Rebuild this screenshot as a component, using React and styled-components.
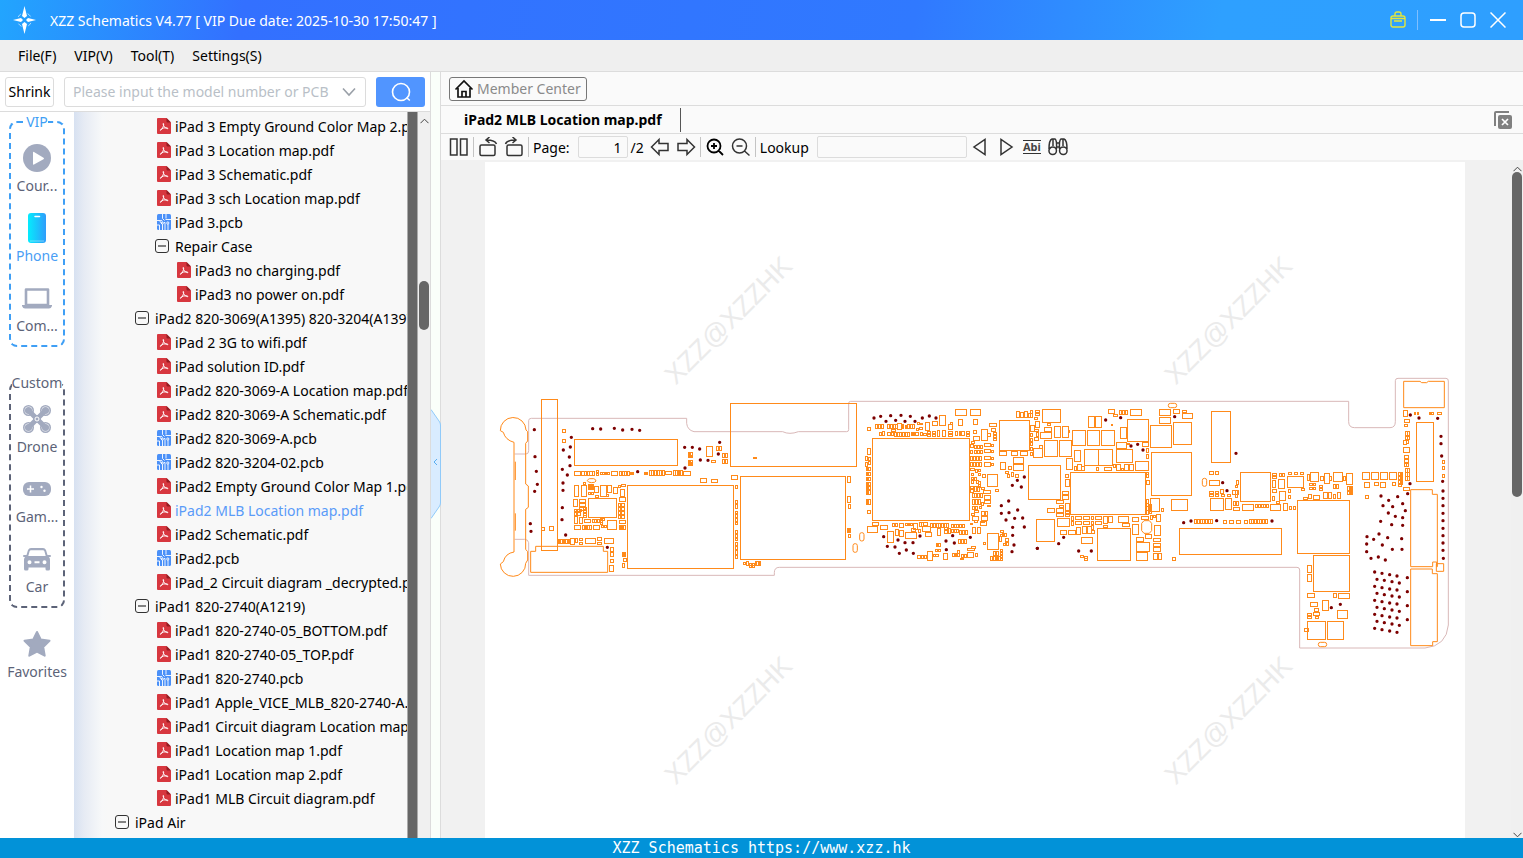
import React, { useState } from "react";
import styled, { createGlobalStyle } from "styled-components";

const GlobalStyle = createGlobalStyle`
  * {
    box-sizing: border-box;
  }
  body {
    margin: 0;
    font-family: "Noto Sans", "Open Sans", sans-serif;
    font-size: 14px;
    line-height: 21px;
    color: #000;
    background: #f0f0f0;
  }
  button, input {
    font: inherit;
    color: inherit;
    margin: 0;
  }
  button {
    padding: 0;
    border: 0;
    background: none;
  }
  a {
    color: inherit;
    text-decoration: none;
  }
  svg {
    display: block;
    flex: none;
  }
`;

const AppStyled = styled.div`
  height: 100vh;
  display: flex;
  flex-direction: column;
`;

const TitleBar = styled.header`
  display: flex;
  align-items: center;
  height: 40px;
  flex: none;
  padding: 0 16px 0 12px;
  color: #fff;
  background: linear-gradient(100deg, #22a5fe 0%, #3370ff 16%, #3079ff 60%, #2ea0ff 80%, #2e9fff 100%);
`;

const Title = styled.h1`
  flex: 1;
  margin: 0 0 0 12px;
  font-size: 14px;
  font-weight: 400;
`;

const WindowButtons = styled.div`
  display: flex;
  align-items: center;
  gap: 12px;
`;

const WindowButton = styled.button`
  display: flex;
  align-items: center;
  justify-content: center;
  width: 18px;
  height: 20px;
`;

const WindowDivider = styled.span`
  width: 1px;
  height: 20px;
  margin: 0 -1px 0 -2px;
  background: #7fbfff;
`;

const MenuBar = styled.nav`
  display: flex;
  align-items: center;
  gap: 18px;
  flex: none;
  height: 32px;
  padding: 0 18px;
  background: #efefef;
  border-bottom: 1px solid #dcdcdc;
`;

const Body = styled.div`
  display: flex;
  flex: 1;
  min-height: 0;
`;

const LeftPanel = styled.aside`
  display: flex;
  flex-direction: column;
  width: 431px;
  flex: none;
  background: #fff;
  border-right: 1px solid #dcdcdc;
`;

const SearchRow = styled.form`
  display: flex;
  align-items: center;
  gap: 10px;
  flex: none;
  height: 40px;
  padding: 0 5px;
  border-bottom: 1px solid #dcdcdc;
`;

const ShrinkButton = styled.button`
  width: 49px;
  height: 30px;
  border: 1px solid #dcdcdc;
  border-radius: 3px;
`;

const SearchBox = styled.div`
  display: flex;
  align-items: center;
  flex: 1;
  height: 30px;
  padding: 0 8px;
  border: 1px solid #dcdcdc;
  border-radius: 3px;
`;

const SearchInput = styled.input`
  flex: 1;
  min-width: 0;
  padding: 0;
  border: 0;
  outline: 0;
  &::placeholder {
    color: #b9bfc7;
  }
`;

const SearchButton = styled.button`
  display: flex;
  align-items: center;
  justify-content: center;
  width: 49px;
  height: 30px;
  border-radius: 3px;
  background: #5195ff;
`;

const LeftContent = styled.div`
  display: flex;
  flex: 1;
  min-height: 0;
`;

const SideNav = styled.nav`
  width: 74px;
  flex: none;
  padding: 0 9px;
  overflow: hidden;
  line-height: 20px;
`;

const NavGroup = styled.fieldset`
  display: flex;
  flex-direction: column;
  gap: 17px;
  min-width: 0;
  margin: 0 0 26px;
  padding: 11px 0 9px;
  border: 2px dashed ${(props) => props.$color};
  border-radius: 8px;
  color: ${(props) => props.$color};
  &:last-of-type {
    margin-bottom: 21px;
  }
`;

const NavLegend = styled.legend`
  margin: 0 auto;
  padding: 0;
  height: 20px;
`;

const NavItem = styled.button`
  display: flex;
  flex-direction: column;
  align-items: center;
  gap: 3px;
  width: 100%;
  color: ${(props) => (props.$active ? "#4a9ef5" : "#5c6378")};
  white-space: nowrap;
`;

const NavIcon = styled.span`
  display: flex;
  align-items: center;
  justify-content: center;
  height: 30px;
  color: #a2aabf;
`;

const Tree = styled.ul`
  flex: 1;
  min-width: 0;
  margin: 0;
  padding: 2px 0 0;
  list-style: none;
  overflow: hidden;
  background: linear-gradient(to right, #d7e1f1 0, #e6ebf4 10px, #f7f8f9 28px, #f8f8f8 34px);
`;

const TreeRow = styled.li`
  display: flex;
  align-items: center;
  gap: 4px;
  height: 24px;
  padding-left: ${(props) => 21 + props.$level * 20}px;
  white-space: nowrap;
`;

const Toggle = styled.button`
  display: flex;
  align-items: center;
  flex: none;
  width: 16px;
  height: 16px;
`;

const FileLink = styled.a`
  display: flex;
  align-items: center;
  gap: 4px;
  padding-left: 2px;
  color: ${(props) => (props.$active ? "#5a9bf8" : "#000")};
`;

const TreeEdge = styled.div`
  width: 11px;
  flex: none;
  background: #666;
  border-left: 1px solid #ababab;
  border-right: 1px solid #ababab;
`;

const ScrollBar = styled.div`
  display: flex;
  flex-direction: column;
  align-items: center;
  justify-content: space-between;
  width: 12px;
  flex: none;
  padding: 6px 0 0;
  background: #f0f0f0;
`;

const ScrollTrack = styled.div`
  flex: 1;
  width: 10px;
  padding-top: ${(props) => props.$top}px;
`;

const ScrollThumb = styled.div`
  height: ${(props) => props.$size}px;
  border-radius: 5px;
  background: #666;
`;

const Splitter = styled.div`
  position: relative;
  width: 10px;
  flex: none;
  background: #fafffa;
  border-right: 1px solid #dcdcdc;
`;

const CollapseTab = styled.button`
  position: absolute;
  top: 44%;
  left: 0;
`;

const Viewer = styled.main`
  display: flex;
  flex-direction: column;
  flex: 1;
  min-width: 0;
  background: #fafafa;
`;

const ViewerHeader = styled.div`
  display: flex;
  align-items: center;
  flex: none;
  height: 34px;
  padding: 0 8px;
  border-bottom: 1px solid #dcdcdc;
`;

const MemberButton = styled.button`
  display: flex;
  align-items: center;
  gap: 3px;
  height: 24px;
  padding: 0 5px 0 4px;
  border: 1px solid #777;
  border-radius: 3px;
  color: #8a8a8a;
`;

const TabRow = styled.div`
  display: flex;
  align-items: center;
  justify-content: space-between;
  flex: none;
  height: 28px;
  padding-right: 11px;
  border-bottom: 1px solid #dcdcdc;
`;

const Tab = styled.button`
  height: 24px;
  padding: 0 18px 0 23px;
  border-right: 1px solid #555;
  font-size: 14px;
  font-weight: 700;
`;

const ToolBar = styled.div`
  display: flex;
  align-items: center;
  flex: none;
  height: 26px;
  padding-left: 4px;
`;

const ToolGroup = styled.div`
  display: flex;
  align-items: center;
  gap: 6px;
  height: 20px;
  padding: 0 4px;
  & + & {
    border-left: 1px solid #c4c4c4;
  }
`;

const ToolButton = styled.button`
  display: flex;
  align-items: center;
  justify-content: center;
  width: 20px;
  height: 20px;
  color: #333;
`;

const ToolInput = styled.input`
  width: ${(props) => props.$width}px;
  height: 22px;
  margin: 0 -3px 0 2px;
  padding: 0 5px;
  border: 1px solid #dcdcdc;
  border-radius: 2px;
  background: #fafafa;
  text-align: right;
`;

const DocumentArea = styled.div`
  display: flex;
  flex: 1;
  min-height: 0;
  background: #f1f1f1;
`;

const PageArea = styled.div`
  flex: 1;
  min-width: 0;
  padding: 2px 46px 0 44px;
  overflow: hidden;
`;

const Page = styled.div`
  min-height: 100%;
  background: #fff;
`;

const Footer = styled.footer`
  flex: none;
  height: 20px;
  font-family: "DejaVu Sans Mono", monospace;
  font-size: 15px;
  text-align: center;
  color: #fff;
  background: #0292d8;
`;

const files = [
  [3, "pdf", "iPad 3 Empty Ground Color Map 2.pdf"],
  [3, "pdf", "iPad 3 Location map.pdf"],
  [3, "pdf", "iPad 3 Schematic.pdf"],
  [3, "pdf", "iPad 3 sch Location map.pdf"],
  [3, "pcb", "iPad 3.pcb"],
  [3, "dir", "Repair Case"],
  [4, "pdf", "iPad3 no charging.pdf"],
  [4, "pdf", "iPad3 no power on.pdf"],
  [2, "dir", "iPad2 820-3069(A1395) 820-3204(A1397)"],
  [3, "pdf", "iPad 2 3G to wifi.pdf"],
  [3, "pdf", "iPad solution ID.pdf"],
  [3, "pdf", "iPad2 820-3069-A Location map.pdf"],
  [3, "pdf", "iPad2 820-3069-A Schematic.pdf"],
  [3, "pcb", "iPad2 820-3069-A.pcb"],
  [3, "pcb", "iPad2 820-3204-02.pcb"],
  [3, "pdf", "iPad2 Empty Ground Color Map 1.pdf"],
  [3, "pdf", "iPad2 MLB Location map.pdf"],
  [3, "pdf", "iPad2 Schematic.pdf"],
  [3, "pcb", "iPad2.pcb"],
  [3, "pdf", "iPad_2 Circuit diagram _decrypted.pdf"],
  [2, "dir", "iPad1 820-2740(A1219)"],
  [3, "pdf", "iPad1 820-2740-05_BOTTOM.pdf"],
  [3, "pdf", "iPad1 820-2740-05_TOP.pdf"],
  [3, "pcb", "iPad1 820-2740.pcb"],
  [3, "pdf", "iPad1 Apple_VICE_MLB_820-2740-A.pdf"],
  [3, "pdf", "iPad1 Circuit diagram Location map.pdf"],
  [3, "pdf", "iPad1 Location map 1.pdf"],
  [3, "pdf", "iPad1 Location map 2.pdf"],
  [3, "pdf", "iPad1 MLB Circuit diagram.pdf"],
  [1, "dir", "iPad Air"],
];

// parts: [x, y, w, h, columns, column pitch, rows, row pitch]
const sections = [
  {
    origin: [15, 654],
    shapes:
      "M31 152A38 38 0 0 1 108 150L113 155V183L107 190V312L115 318V382L107 388V508L113 515V540L107 550A38 38 0 0 1 31 552L40 545Q46 520 72 516V187Q46 180 40 157ZM76 245V300M76 400V452M122 577V514H137V499H340V514H353V577ZM299 296H311Q318 298 318 303Q316 308 305 308Q294 308 292 302Q294 297 299 296Z",
    parts: [
      [154, 58, 48, 454], [254, 179, 309, 78], [722, 70, 377, 189], [412, 316, 319, 249],
      [750, 290, 317, 248], [294, 355, 85, 57], [351, 421, 28, 27], [650, 199, 17, 31],
      [216, 149, 10, 9], [216, 178, 10, 9], [178, 439, 12, 11], [154, 443, 9, 9],
      [680, 199, 6, 11, 2, 9], [698, 220, 6, 11, 2, 9, 2, 18], [664, 240, 11, 7],
      [594, 218, 4, 15, 3, 4, 2, 23], [594, 226, 11, 4, 1, 0, 2, 22], [791, 232, 8, 4],
      [254, 275, 17, 10], [275, 274, 7, 12, 5, 8], [318, 272, 8, 6, 1, 0, 2, 8], [331, 276, 5, 7, 4, 7],
      [365, 275, 18, 11], [388, 274, 6, 12, 4, 8], [420, 277, 4, 6, 2, 6],
      [462, 277, 4, 7, 2, 6], [477, 272, 6, 13, 6, 8], [526, 274, 19, 10], [550, 272, 5, 13, 4, 7],
      [580, 275, 20, 11], [631, 296, 18, 10], [664, 298, 18, 10], [725, 287, 17, 11],
      [737, 317, 6, 8], [737, 361, 6, 10, 1, 0, 2, 13], [737, 393, 6, 8, 1, 0, 4, 11],
      [737, 452, 6, 8, 1, 0, 3, 11], [737, 486, 6, 10, 1, 0, 4, 13],
      [1072, 290, 10, 17], [1072, 349, 10, 18], [1074, 374, 7, 12], [1073, 446, 3, 11, 2, 4], [1075, 463, 7, 9],
      [253, 317, 13, 31], [274, 317, 15, 31], [332, 316, 16, 32], [280, 308, 5, 6], [295, 312, 4, 16, 3, 6],
      [314, 318, 12, 20], [352, 317, 12, 20], [371, 323, 10, 18], [385, 317, 7, 5], [395, 313, 11, 6],
      [392, 328, 11, 20], [295, 337, 5, 7, 2, 9], [315, 346, 11, 5], [350, 343, 6, 6],
      [251, 358, 12, 21], [268, 357, 18, 9, 1, 0, 3, 12], [387, 353, 18, 10], [253, 387, 7, 7, 2, 10, 2, 11],
      [280, 383, 8, 6, 1, 0, 4, 8], [270, 388, 5, 6], [384, 371, 6, 9, 1, 0, 4, 12], [395, 371, 9, 9, 1, 0, 4, 12],
      [388, 422, 18, 9], [252, 410, 10, 19], [267, 412, 10, 18], [283, 418, 18, 10],
      [306, 418, 6, 8, 4, 8], [330, 426, 8, 6], [335, 436, 4, 6, 2, 9], [254, 437, 18, 11],
      [278, 436, 5, 12, 4, 7], [309, 437, 19, 11], [387, 436, 4, 11, 3, 7], [332, 416, 10, 6],
      [204, 479, 4, 11, 4, 4], [223, 479, 4, 11, 4, 4], [242, 474, 11, 18], [257, 476, 6, 11],
      [269, 475, 9, 7, 1, 0, 2, 11], [287, 475, 30, 16], [323, 472, 12, 8, 1, 0, 2, 14], [343, 475, 28, 16],
      [362, 503, 8, 10, 1, 0, 2, 15], [362, 538, 8, 9], [359, 556, 10, 18], [397, 517, 3, 12, 3, 3],
      [401, 535, 8, 10], [397, 550, 7, 12], [761, 546, 4, 7], [768, 545, 6, 12], [779, 551, 6, 6, 2, 7, 2, 6],
      [796, 545, 4, 11, 4, 4],
    ],
    ovals: [[1109, 458, 13, 25], [1089, 491, 13, 26]],
    vias: [
      133, 149, 135, 230, 139, 274, 142, 313, 134, 334, 121, 431, 123, 454, 244, 172, 241, 201, 220, 210,
      238, 231, 240, 257, 217, 268, 232, 285, 219, 309, 219, 331, 217, 383, 216, 419, 227, 465, 352, 502,
      308, 146, 332, 147, 373, 145, 398, 150, 426, 148, 449, 151, 584, 202, 607, 202, 629, 207, 631, 240,
      654, 241, 585, 264, 689, 187, 685, 222, 443, 275,
    ],
  },
  {
    origin: [1095, 684],
    parts: [
      [66, 145, 292, 246], [53, 112, 8, 10], [77, 104, 6, 11, 3, 8], [113, 104, 6, 11, 4, 8], [142, 100, 12, 19],
      [156, 104, 5, 11], [165, 106, 5, 8], [173, 104, 6, 11, 3, 7], [125, 117, 11, 6], [201, 97, 6, 6],
      [207, 99, 9, 5, 1, 0, 2, 14], [199, 116, 6, 6], [227, 97, 12, 24], [246, 94, 17, 12], [268, 76, 18, 31],
      [295, 104, 12, 14], [300, 96, 8, 6], [317, 59, 31, 18], [362, 59, 30, 18], [326, 87, 11, 19],
      [371, 87, 11, 17], [88, 127, 6, 9], [97, 124, 6, 12], [111, 126, 9, 10], [124, 128, 6, 8],
      [133, 126, 6, 12, 6, 8], [184, 127, 4, 8, 2, 6], [197, 127, 9, 9], [211, 127, 5, 8], [220, 130, 9, 6],
      [233, 124, 9, 6, 2, 13, 2, 9], [263, 121, 6, 17], [277, 120, 8, 18], [294, 123, 12, 6, 1, 0, 2, 9],
      [317, 125, 5, 12, 2, 10], [334, 125, 9, 12], [348, 124, 9, 6, 1, 0, 2, 9],
      [51, 176, 11, 17], [47, 199, 5, 13, 1, 0, 2, 18], [56, 201, 6, 9, 1, 0, 2, 13], [48, 233, 5, 9, 2, 8, 3, 15],
      [48, 276, 5, 10, 2, 8, 3, 13], [48, 328, 5, 14, 2, 7], [51, 361, 10, 10],
      [371, 122, 8, 7], [371, 139, 17, 12], [364, 153, 9, 6], [394, 118, 17, 32], [418, 100, 22, 10],
      [423, 114, 14, 9], [413, 129, 8, 9], [431, 127, 8, 6, 1, 0, 3, 9], [362, 164, 7, 9], [373, 165, 6, 10, 3, 9, 2, 15],
      [362, 180, 6, 10], [403, 160, 19, 9, 1, 0, 2, 19], [403, 198, 19, 11, 1, 0, 2, 19], [424, 162, 6, 7, 1, 0, 2, 19],
      [362, 199, 6, 12, 4, 9], [362, 218, 6, 12, 4, 9], [424, 202, 6, 6, 1, 0, 2, 19], [362, 235, 10, 6],
      [375, 238, 6, 10], [385, 239, 6, 6, 1, 0, 2, 12], [364, 250, 6, 6, 1, 0, 2, 11], [374, 262, 6, 9],
      [397, 253, 8, 8], [413, 253, 30, 37], [365, 270, 5, 10, 2, 15], [384, 273, 6, 9, 1, 0, 2, 11],
      [362, 288, 7, 7, 1, 0, 2, 11], [373, 290, 6, 13, 2, 10], [395, 292, 8, 6], [401, 300, 19, 11],
      [437, 298, 8, 6], [366, 311, 6, 12, 4, 8], [403, 317, 19, 10, 1, 0, 2, 14], [366, 329, 6, 13, 3, 9],
      [393, 338, 8, 9], [412, 345, 9, 5], [367, 350, 6, 9, 2, 9], [387, 350, 6, 6], [372, 360, 12, 6],
      [395, 364, 7, 12, 2, 10], [366, 379, 18, 11], [394, 380, 18, 11], [363, 369, 10, 7],
      [66, 397, 20, 10], [51, 410, 32, 17], [92, 407, 20, 12], [127, 400, 6, 10, 2, 9], [149, 400, 12, 11],
      [167, 399, 5, 8, 3, 7], [191, 399, 10, 19], [208, 397, 5, 11, 2, 6], [220, 397, 13, 8], [218, 409, 22, 14],
      [242, 400, 6, 11, 7, 8], [304, 402, 6, 11, 5, 8], [304, 417, 6, 11, 3, 8], [329, 421, 6, 11, 3, 9],
      [113, 424, 18, 34], [135, 419, 10, 17], [148, 422, 12, 17], [166, 427, 33, 18], [204, 417, 7, 10],
      [226, 427, 19, 12], [262, 416, 10, 20], [283, 412, 9, 7, 1, 0, 2, 10], [183, 414, 14, 9], [367, 412, 9, 18, 2, 15],
      [373, 390, 9, 7, 2, 20], [390, 395, 18, 11], [361, 399, 6, 4], [295, 416, 7, 13],
      [258, 461, 5, 9, 2, 8], [324, 449, 6, 11, 3, 9], [255, 477, 9, 7, 2, 8], [203, 497, 8, 7], [215, 495, 5, 11, 2, 8],
      [231, 485, 17, 26], [249, 493, 8, 6, 2, 7], [281, 490, 12, 18], [307, 489, 5, 10, 3, 8], [322, 482, 5, 9],
      [335, 492, 5, 9, 2, 8], [353, 486, 17, 17], [351, 474, 22, 6], [365, 468, 10, 6], [376, 490, 6, 10], [330, 505, 9, 4],
      [413, 430, 32, 47], [401, 457, 6, 5], [451, 422, 10, 6, 1, 0, 2, 12], [458, 429, 4, 9, 2, 6], [448, 440, 6, 15],
      [467, 446, 8, 8, 1, 0, 2, 11], [460, 460, 8, 6], [430, 484, 7, 11, 2, 9], [422, 500, 5, 10, 4, 8],
      [450, 478, 8, 6, 1, 0, 4, 9], [447, 92, 90, 88], [498, 64, 9, 18], [511, 66, 9, 16], [522, 64, 10, 18],
      [448, 184, 21, 12], [485, 184, 18, 12], [512, 184, 21, 12], [451, 217, 16, 21], [490, 202, 31, 17],
      [490, 223, 31, 18], [475, 229, 8, 9], [467, 245, 8, 6], [472, 253, 6, 9], [483, 248, 6, 10], [497, 253, 9, 9],
      [536, 70, 10, 12],
    ],
    vias: [
      72, 84, 92, 79, 108, 94, 122, 77, 137, 91, 153, 76, 165, 94, 181, 79, 195, 94, 217, 84, 238, 78, 258, 84,
      101, 440, 144, 450, 165, 458, 189, 458, 210, 438, 112, 469, 135, 471, 148, 490, 169, 480, 190, 490,
      308, 437, 288, 453, 313, 459, 289, 479, 361, 442, 523, 261, 502, 271, 487, 286, 514, 291, 476, 333,
      454, 347, 503, 360, 454, 370, 477, 368, 494, 385, 468, 390, 518, 384, 488, 412, 523, 411, 488, 436,
      492, 465, 486, 485, 562, 475,
    ],
  },
  {
    origin: [1635, 684],
    shapes: "M342 392H358L365 400V422L358 430H342L335 422V400Z",
    parts: [
      [0, 62, 7, 20], [15, 61, 12, 6, 1, 0, 2, 9], [13, 82, 9, 6], [17, 93, 11, 19], [1, 107, 13, 17],
      [37, 59, 54, 38], [52, 100, 10, 7], [43, 113, 20, 10], [32, 127, 32, 17], [14, 118, 12, 6], [19, 128, 7, 12],
      [0, 130, 7, 9, 1, 0, 5, 14], [14, 141, 12, 9], [11, 176, 26, 26], [28, 166, 10, 8], [73, 109, 17, 34],
      [97, 109, 18, 34], [43, 152, 39, 47], [87, 152, 38, 47], [-5, 226, 96, 101],
      [176, 79, 17, 33], [196, 80, 19, 32], [235, 59, 18, 11], [250, 73, 12, 7], [269, 62, 6, 11, 3, 8],
      [302, 59, 32, 17], [128, 121, 39, 45], [172, 121, 37, 45], [214, 121, 39, 45], [243, 104, 3, 3],
      [272, 112, 17, 33], [292, 88, 63, 65], [362, 107, 62, 64], [431, 97, 54, 67], [389, 59, 32, 17],
      [389, 82, 32, 18], [431, 59, 17, 11], [457, 60, 12, 6], [458, 70, 30, 15], [260, 157, 30, 17],
      [293, 159, 6, 5], [337, 157, 18, 12], [348, 175, 8, 11], [348, 193, 8, 11], [164, 179, 40, 47],
      [206, 179, 40, 47], [260, 178, 47, 38], [133, 181, 18, 32], [109, 206, 18, 32], [116, 121, 3, 6],
      [316, 214, 40, 28], [141, 223, 12, 19], [132, 230, 6, 11], [155, 230, 7, 11], [198, 231, 8, 11],
      [223, 232, 21, 10], [249, 222, 6, 10], [259, 223, 11, 19], [274, 235, 5, 7], [284, 222, 12, 20, 2, 14],
      [122, 247, 223, 126], [364, 186, 121, 131], [348, 246, 8, 7, 1, 0, 2, 8], [350, 271, 7, 12],
      [106, 252, 9, 11], [106, 268, 11, 22], [97, 303, 19, 10], [97, 317, 19, 11], [79, 331, 20, 10], [89, 345, 10, 8],
      [106, 340, 11, 20], [52, 355, 20, 11], [79, 356, 20, 10], [79, 370, 20, 10], [106, 363, 11, 7, 1, 0, 2, 10],
      [348, 328, 6, 11, 1, 0, 4, 11], [357, 342, 6, 8, 1, 0, 3, 10], [362, 325, 26, 40], [393, 355, 7, 10], [424, 329, 48, 33],
      [82, 385, 37, 24], [124, 380, 7, 11, 1, 0, 2, 15], [135, 379, 19, 10, 1, 0, 2, 14], [160, 379, 19, 10, 1, 0, 2, 14],
      [184, 379, 7, 10, 1, 0, 3, 14], [196, 379, 19, 10, 1, 0, 2, 14], [220, 379, 11, 20], [236, 379, 11, 19],
      [221, 406, 11, 6], [266, 379, 30, 18], [277, 400, 21, 10], [307, 382, 19, 12], [335, 379, 21, 10],
      [361, 375, 7, 12], [371, 375, 6, 8], [379, 374, 12, 20], [307, 403, 18, 31], [373, 406, 18, 31],
      [91, 421, 19, 12], [115, 421, 21, 12], [140, 413, 12, 20], [157, 410, 11, 20], [172, 410, 11, 20], [185, 421, 7, 9],
      [19, 388, 54, 66], [154, 443, 32, 18], [151, 497, 9, 6], [164, 499, 9, 5, 1, 0, 2, 7],
      [202, 415, 99, 96], [319, 457, 39, 27], [320, 487, 33, 24], [320, 442, 20, 11], [347, 433, 18, 12],
      [370, 445, 20, 10, 1, 0, 3, 14], [370, 490, 11, 19, 2, 14], [427, 502, 9, 10],
    ],
    ovals: [[415, 40, 25, 13]],
    vias: [
      227, 90, 272, 83, 434, 80, 323, 163, 303, 168, 339, 180, 22, 475, 86, 461, 101, 442, 146, 483, 184, 483,
    ],
  },
  {
    origin: [2025, 624],
    shapes:
      "M731 34H780L785 38H800L805 34H853V113H731ZM752 359H817V373H832V590H830V576H818V590H752ZM752 597H817V611H832V815H818V827H752ZM829 581H851V604H829Z",
    parts: [
      [154, 125, 56, 152], [148, 305, 11, 8, 2, 17], [149, 331, 30, 15], [148, 365, 11, 6, 2, 17, 2, 8],
      [182, 358, 8, 12], [183, 373, 11, 7], [202, 373, 10, 7], [217, 361, 17, 11], [225, 347, 8, 6],
      [229, 330, 7, 12], [152, 385, 38, 36], [197, 386, 18, 32], [227, 362, 6, 19], [220, 395, 6, 12, 2, 8],
      [221, 412, 18, 10], [242, 306, 90, 88], [337, 311, 12, 6, 1, 0, 2, 9], [357, 311, 6, 9, 2, 9],
      [337, 331, 9, 20], [354, 329, 19, 26], [337, 358, 12, 9], [336, 379, 8, 12], [358, 365, 18, 25],
      [349, 394, 10, 7], [248, 403, 32, 18], [287, 403, 6, 10, 5, 8], [331, 403, 30, 18], [370, 401, 11, 20],
      [388, 408, 6, 10, 2, 12], [384, 306, 11, 7, 3, 18], [383, 319, 47, 33], [384, 357, 6, 10, 1, 0, 2, 18],
      [425, 355, 9, 7], [442, 312, 6, 20], [452, 308, 24, 27], [482, 319, 7, 12], [492, 310, 15, 31],
      [508, 318, 7, 14], [521, 308, 25, 26], [551, 319, 6, 12], [560, 311, 17, 31], [449, 340, 8, 7, 2, 10, 2, 12],
      [479, 345, 9, 6, 1, 0, 2, 11], [519, 342, 6, 12, 2, 10], [446, 373, 9, 12], [460, 376, 19, 11],
      [490, 367, 11, 19], [505, 367, 10, 19], [519, 374, 6, 12], [531, 367, 11, 18], [431, 382, 11, 7],
      [563, 349, 4, 11, 3, 5, 2, 14], [412, 392, 157, 158], [461, 557, 108, 107], [58, 475, 307, 77],
      [104, 449, 6, 11, 7, 8], [189, 450, 11, 9, 3, 20], [252, 450, 11, 9], [267, 448, 6, 11, 7, 8],
      [37, 563, 9, 9], [607, 308, 22, 20, 4, 27], [614, 338, 14, 13], [642, 338, 12, 9], [661, 338, 15, 14],
      [697, 338, 10, 9], [615, 377, 10, 8], [716, 306, 5, 10, 2, 7, 3, 13], [715, 340, 10, 8],
      [730, 351, 18, 10], [731, 122, 11, 17], [732, 149, 17, 8], [732, 164, 10, 6], [737, 185, 5, 11, 2, 6, 2, 13],
      [731, 212, 8, 11], [740, 210, 6, 9], [730, 233, 18, 14], [734, 257, 11, 8, 1, 0, 2, 11], [733, 281, 6, 9, 2, 6],
      [737, 295, 5, 11, 2, 6, 3, 12], [763, 126, 4, 8, 2, 8], [808, 126, 4, 8, 2, 7], [833, 128, 10, 6],
      [769, 157, 51, 178], [847, 270, 7, 10, 1, 0, 2, 18], [847, 312, 7, 11],
      [442, 587, 12, 20, 1, 0, 2, 26], [443, 671, 19, 11], [521, 671, 9, 11], [536, 669, 32, 17],
      [452, 698, 20, 10], [488, 692, 17, 30], [463, 716, 12, 8], [460, 727, 19, 9], [443, 731, 11, 5, 1, 0, 2, 8],
      [466, 740, 10, 5], [531, 721, 32, 25], [443, 755, 54, 53], [501, 755, 50, 53], [433, 775, 12, 9],
    ],
    ovals: [[127, 325, 13, 24], [475, 817, 25, 13]],
    vias: [
      228, 250, 188, 338, 201, 362, 71, 458, 93, 453, 170, 452, 336, 453, 751, 135, 777, 144, 833, 145,
      843, 199, 843, 221, 845, 258, 848, 334, 750, 341, 743, 371, 849, 363, 849, 385, 849, 407, 849, 430,
      849, 452, 849, 475, 849, 497, 849, 519, 849, 541, 850, 565, 663, 378, 686, 391, 713, 380, 728, 401,
      669, 407, 698, 410, 736, 422, 685, 429, 706, 439, 728, 443, 662, 454, 695, 464, 728, 466, 657, 492,
      621, 500, 683, 503, 641, 508, 725, 506, 620, 522, 667, 525, 620, 545, 697, 538, 726, 538, 655, 561,
      633, 565, 676, 570, 742, 623, 742, 665, 742, 707, 742, 749, 514, 713, 541, 703,
      644, 606, 666, 610, 689, 614, 711, 618, 651, 628, 673, 631, 696, 635, 718, 639,
      644, 649, 666, 653, 689, 657, 711, 660, 651, 670, 673, 674, 696, 678, 718, 681,
      644, 691, 666, 695, 689, 699, 711, 702, 651, 712, 673, 716, 696, 720, 718, 724,
      644, 733, 666, 737, 689, 741, 711, 744, 651, 754, 673, 758, 696, 762, 718, 766,
      644, 775, 666, 779, 689, 783, 711, 787,
    ],
  },
];

const partsPath = (parts) => {
  let d = "";
  parts.forEach(([x, y, w, h, cols = 1, dx = 0, rows = 1, dy = 0]) => {
    for (let r = 0; r < rows; r++) {
      for (let c = 0; c < cols; c++) {
        d += `M${x + c * dx} ${y + r * dy}h${w}v${h}h${-w}z`;
      }
    }
  });
  return d;
};

const viasPath = (vias) => {
  let d = "";
  for (let i = 0; i < vias.length; i += 2) {
    d += `M${vias[i]} ${vias[i + 1]}h0`;
  }
  return d;
};

const Board = () => (
  <svg viewBox="0 0 2940 2028" width="100%" fill="none" role="img" aria-label="iPad2 MLB Location map">
    <g fill="#ebebeb" fontFamily="Liberation Sans, sans-serif" fontSize="81" textAnchor="middle">
      {[[729, 474], [2229, 474], [729, 1674], [2229, 1674]].map(([x, y]) => (
        <text key={`${x}-${y}`} transform={`translate(${x} ${y}) rotate(-45)`} y="29">XZZ@XZZHK</text>
      ))}
    </g>
    <path
      transform="translate(15 654)"
      stroke="#d9b8b8"
      strokeWidth="3"
      d="M74 222H108Q116 222 116 212V122Q116 115 124 115H590V130Q592 150 612 155H878Q888 160 900 160T925 155H1070Q1076 155 1076 149V70Q1076 64 1082 64H2576V125Q2576 143 2594 143H2700Q2716 143 2716 125V2Q2716 -5 2724 -5H2868Q2875 -5 2875 3V735Q2870 798 2805 804H2429V570Q2429 562 2421 562H868Q853 562 853 578V586H116V488Q114 478 104 478H74"
    />
    {sections.map(({ origin, shapes, parts, ovals = [], vias }) => (
      <g key={origin[0]} transform={`translate(${origin[0]} ${origin[1]})`} stroke="#ff8a1a" strokeWidth="3">
        {shapes && <path d={shapes} />}
        <path d={partsPath(parts)} shapeRendering="crispEdges" />
        {ovals.map(([x, y, w, h]) => (
          <rect key={x} x={x} y={y} width={w} height={h} rx="6" />
        ))}
        <path d={viasPath(vias)} stroke="#7d0000" strokeWidth="10" strokeLinecap="round" />
      </g>
    ))}
  </svg>
);

const LogoIcon = () => (
  <svg width="26" height="30" viewBox="0 0 26 30" fill="#fff">
    <path d="M12.500 1L15 11L12.500 13L10 11ZM12.500 29L15 19L12.500 17L10 19ZM1 15L9 13L11 15L9 17ZM24 15L16 13L14 15L16 17Z" />
    <circle cx="12.500" cy="15" r="7" fill="none" stroke="#fff" strokeOpacity=".6" strokeWidth="1" strokeDasharray="4 7" strokeDashoffset="-3" />
  </svg>
);

const ToolboxIcon = () => (
  <svg width="16" height="18" viewBox="0 0 16 18" fill="none" stroke="#e3e63c" strokeWidth="1.4">
    <rect x="1" y="5" width="14" height="11" rx="2" />
    <path d="M5 5V3Q5 1 7 1H9Q11 1 11 3V5M1 7.500H15M4 10H12" />
  </svg>
);

const CoursesIcon = () => (
  <svg width="28" height="28" viewBox="0 0 28 28">
    <circle cx="14" cy="14" r="14" fill="currentColor" />
    <path d="M10 8.500V20Q10 21 11 20.500L20.500 15.200Q21.600 14.500 20.500 13.700L11 8Q10 7.500 10 8.500Z" fill="#fff" />
  </svg>
);

const PhoneIcon = () => (
  <svg width="18" height="30" viewBox="0 0 18 30">
    <defs>
      <linearGradient id="phone">
        <stop offset="0" stopColor="#05ecfd" />
        <stop offset="1" stopColor="#2f9dfb" />
      </linearGradient>
    </defs>
    <rect width="18" height="30" rx="3" fill="url(#phone)" />
    <path d="M7 3.500H11.500" stroke="#fff" strokeWidth="1.500" strokeLinecap="round" />
    <path d="M2 28H16" stroke="#fff" strokeOpacity=".4" />
  </svg>
);

const ComputerIcon = () => (
  <svg width="30" height="21" viewBox="0 0 30 21">
    <path d="M4 1.500H26V17H4Z" fill="none" stroke="currentColor" strokeWidth="2.600" strokeLinejoin="round" />
    <path d="M0 17H30V18Q29 20.500 27 20.500H3Q1 20.500 0 18Z" fill="currentColor" />
  </svg>
);

const DroneIcon = () => (
  <svg width="28" height="28" viewBox="0 0 28 28" fill="none" stroke="currentColor">
    <path d="M6 6L14 14L22 6M6 22L14 14L22 22" strokeWidth="5" />
    {[[5.500, 5.500], [22.500, 5.500], [5.500, 22.500], [22.500, 22.500]].map(([x, y]) => (
      <g key={`${x}${y}`}>
        <circle cx={x} cy={y} r="3.600" fill="currentColor" stroke="none" />
        <circle cx={x} cy={y} r="4.700" strokeWidth="1.600" />
      </g>
    ))}
    <circle cx="14" cy="14" r="4" fill="currentColor" stroke="none" />
    <circle cx="14" cy="14" r="2" stroke="#fff" strokeWidth="1" />
  </svg>
);

const GamesIcon = () => (
  <svg width="28" height="14" viewBox="0 0 28 14">
    <rect width="28" height="14" rx="6" fill="currentColor" />
    <path d="M7.500 3.500V10.500M4 7H11" stroke="#fff" strokeWidth="1.500" />
    <circle cx="18.500" cy="5" r="1.200" fill="#fff" />
    <circle cx="21.500" cy="8.800" r="1.200" fill="#fff" />
  </svg>
);

const CarIcon = () => (
  <svg width="28" height="24" viewBox="0 0 28 24">
    <path
      fill="currentColor"
      fillRule="evenodd"
      d="M8 1H20Q22 1 23 3L24.500 8H27Q28 8 28 9Q28 10 27 10H26Q27 11 27 13V22Q27 23.500 25.500 23.500H24Q22.500 23.500 22.500 22V20.500H5.500V22Q5.500 23.500 4 23.500H2.500Q1 23.500 1 22V13Q1 11 2 10H1Q0 10 0 9Q0 8 1 8H3.500L5 3Q6 1 8 1ZM8 3.200Q7 3.200 6.600 4.200L5.300 9H22.700L21.400 4.200Q21 3.200 20 3.200ZM6.500 13.200A2 2 0 1 0 6.500 17.200A2 2 0 1 0 6.500 13.200M21.500 13.200A2 2 0 1 0 21.500 17.200A2 2 0 1 0 21.500 13.200M11.500 14.300V16.300H16.500V14.300Z"
    />
  </svg>
);

const StarIcon = () => (
  <svg width="28" height="28" viewBox="0 0 28 28">
    <path
      d="M14 2L17.700 9.500L26.500 10.800L20.200 17L21.700 25.700L14 21.600L6.300 25.700L7.800 17L1.500 10.800L10.300 9.500Z"
      fill="currentColor"
      stroke="currentColor"
      strokeWidth="2"
      strokeLinejoin="round"
    />
  </svg>
);

const PdfIcon = () => (
  <svg width="14" height="16" viewBox="0 0 14 16">
    <path d="M1 0H9.500L14 4.500V15Q14 16 13 16H1Q0 16 0 15V1Q0 0 1 0Z" fill="#d7373f" />
    <path d="M9.500 0L14 4.500H10.500Q9.500 4.500 9.500 3.500Z" fill="#941d23" />
    <path
      d="M3.300 12.300Q5.500 11.500 6.600 7.500Q6.900 5.500 6.300 5.400Q5.800 5.600 6.500 7.500Q7.800 10.500 10.800 10.800Q11.300 10 9.500 9.700Q6 9.700 4 11.300Q3 12 3.300 12.300"
      fill="none"
      stroke="#fff"
      strokeWidth=".9"
    />
  </svg>
);

const PcbIcon = () => (
  <svg width="14" height="16" viewBox="0 0 14 16">
    <rect width="14" height="16" rx="1.500" fill="#4a90f8" />
    <g fill="none" stroke="#fff" strokeWidth=".9">
      <path d="M5.500 0V4.500L7.500 6.500M0 6.500H3.500M9 0V4.500M8.500 5.500H14M5.500 16V10.500L4 9M0 11H2.500V16M8 16V8.500H6.500M11 16V10" />
      <circle cx="4.200" cy="7.500" r="1.100" />
      <circle cx="10.800" cy="9" r="1.100" />
      <circle cx="5.500" cy="9.500" r=".8" />
    </g>
  </svg>
);

const MinusBox = () => (
  <svg width="14" height="14" viewBox="0 0 14 14" fill="none" stroke="#333">
    <rect x=".5" y=".5" width="13" height="13" rx="2.500" />
    <path d="M3 7H11" strokeWidth="1.200" />
  </svg>
);

const Chevron = ({ down }) => (
  <svg width="9" height="6" viewBox="0 0 9 6" fill="none" stroke="#444">
    <path d={down ? "M.5 .8L4.500 4.800L8.500 .8" : "M.5 5.200L4.500 1.200L8.500 5.200"} />
  </svg>
);

const HomeIcon = () => (
  <svg width="20" height="20" viewBox="0 0 20 20" fill="none" stroke="#111" strokeWidth="1.700">
    <path d="M1.500 10.500L10 2L18.500 10.500M4 9V18H16V9M8 18V12.500H12V18" />
  </svg>
);

const CloseAllIcon = () => (
  <svg width="18" height="18" viewBox="0 0 18 18" fill="none">
    <path d="M1 15V2Q1 1 2 1H15" stroke="#808080" strokeWidth="2" />
    <rect x="4" y="4" width="14" height="14" rx="2" fill="#808080" />
    <path d="M8 8L14 14M14 8L8 14" stroke="#fff" strokeWidth="1.700" />
  </svg>
);

const toolPaths = {
  book: "M1.500 2H8V18H1.500ZM11.500 2H18V18H11.500Z",
  rotateLeft: "M3.500 8H15.500Q17 8 17 9.500V17Q17 18.500 15.500 18.500H3.500Q2 18.500 2 17V9.500Q2 8 3.500 8ZM18.500 7Q17 2.800 8 3M11.500 0L8 3L11.500 6",
  rotateRight: "M4.500 8H16.500Q18 8 18 9.500V17Q18 18.500 16.500 18.500H4.500Q3 18.500 3 17V9.500Q3 8 4.500 8ZM1.500 7Q3 2.800 12 3M8.500 0L12 3L8.500 6",
  arrowLeft: "M1.500 10L9 2.500V6.500H18V13.500H9V17.500Z",
  arrowRight: "M18.500 10L11 2.500V6.500H2V13.500H11V17.500Z",
  zoomOut: "M8.500 2A7 7 0 1 0 8.500 16A7 7 0 1 0 8.500 2M13.500 14L18.500 18.500M5.500 9H11.500",
  previous: "M15 2.500V17.500L4 10Z",
  next: "M5 2.500V17.500L16 10Z",
  find: "M1 12Q1 3 4 2H7Q9 3 8.500 12M11.500 12Q11 3 13 2H16Q19 3 19 12M8.500 6H11.500M8.500 10H11.500M4.700 10A3.700 3.700 0 1 0 4.700 17.500A3.700 3.700 0 1 0 4.700 10M15.300 10A3.700 3.700 0 1 0 15.300 17.500A3.700 3.700 0 1 0 15.300 10M5 2V9M15 2V9",
};

const Tool = ({ name, label }) => (
  <ToolButton aria-label={label}>
    <svg width="20" height="20" viewBox="0 0 20 20" fill="none" stroke="currentColor" strokeWidth="1.500">
      <path d={toolPaths[name]} />
    </svg>
  </ToolButton>
);

const ZoomInTool = () => (
  <ToolButton aria-label="Zoom in">
    <svg width="20" height="20" viewBox="0 0 20 20" fill="none" stroke="#000" strokeWidth="1.800">
      <path d="M9 2.500A6.500 6.500 0 1 0 9 15.500A6.500 6.500 0 1 0 9 2.500M13.500 13.500L18 18M6 9H12M9 6V12" />
    </svg>
  </ToolButton>
);

const AbiLabel = styled.span`
  border-top: 1px solid #333;
  border-bottom: 1px solid #333;
  font-size: 11px;
  font-weight: 700;
  line-height: 12px;
  color: #444;
`;

const navGroups = [
  {
    title: "VIP",
    color: "#3f9ff5",
    items: [["Cour...", CoursesIcon], ["Phone", PhoneIcon], ["Com...", ComputerIcon]],
  },
  {
    title: "Custom",
    color: "#5c6378",
    items: [["Drone", DroneIcon], ["Gam...", GamesIcon], ["Car", CarIcon]],
  },
];

const SideItem = ({ label, icon: Icon, active }) => (
  <NavItem $active={active}>
    <NavIcon>
      <Icon />
    </NavIcon>
    {label}
  </NavItem>
);

const FileTree = () => {
  const [selected, setSelected] = useState("iPad2 MLB Location map.pdf");
  return (
    <Tree>
      {files.map(([level, type, name]) => (
        <TreeRow key={name} $level={level}>
          {type === "dir" ? (
            <>
              <Toggle aria-label={`Collapse ${name}`}>
                <MinusBox />
              </Toggle>
              <span>{name}</span>
            </>
          ) : (
            <FileLink href="#" $active={name === selected} onClick={() => setSelected(name)}>
              {type === "pdf" ? <PdfIcon /> : <PcbIcon />}
              {name}
            </FileLink>
          )}
        </TreeRow>
      ))}
    </Tree>
  );
};

const App = () => {
  const [page, setPage] = useState("1");
  return (
    <AppStyled>
      <GlobalStyle />
      <TitleBar>
        <LogoIcon />
        <Title>XZZ Schematics V4.77 [ VIP Due date: 2025-10-30 17:50:47 ]</Title>
        <WindowButtons>
          <WindowButton aria-label="Toolbox">
            <ToolboxIcon />
          </WindowButton>
          <WindowDivider />
          <WindowButton aria-label="Minimize">
            <svg width="16" height="16" stroke="#fff" strokeWidth="2">
              <path d="M0 8H16" />
            </svg>
          </WindowButton>
          <WindowButton aria-label="Maximize">
            <svg width="16" height="16" fill="none" stroke="#fff" strokeWidth="1.500">
              <rect x="1" y="1" width="14" height="14" rx="3" />
            </svg>
          </WindowButton>
          <WindowButton aria-label="Close">
            <svg width="16" height="16" stroke="#fff" strokeWidth="1.500">
              <path d="M.5 .5L15.500 15.500M15.500 .5L.5 15.500" />
            </svg>
          </WindowButton>
        </WindowButtons>
      </TitleBar>
      <MenuBar>
        <button>File(F)</button>
        <button>VIP(V)</button>
        <button>Tool(T)</button>
        <button>Settings(S)</button>
      </MenuBar>
      <Body>
        <LeftPanel>
          <SearchRow>
            <ShrinkButton type="button">Shrink</ShrinkButton>
            <SearchBox>
              <SearchInput aria-label="Model number" placeholder="Please input the model number or PCB" />
              <button type="button" aria-label="Search history">
                <svg width="16" height="12" viewBox="0 0 16 12" fill="none" stroke="#9aa0a8" strokeWidth="1.600">
                  <path d="M2 2.500L8 9L14 2.500" />
                </svg>
              </button>
            </SearchBox>
            <SearchButton type="button" aria-label="Search">
              <svg width="20" height="20" viewBox="0 0 20 20" fill="none" stroke="#fff" strokeWidth="1.600">
                <circle cx="10" cy="10" r="8.500" />
                <path d="M15.500 15.500L18.800 18.500" />
              </svg>
            </SearchButton>
          </SearchRow>
          <LeftContent>
            <SideNav>
              {navGroups.map(({ title, color, items }) => (
                <NavGroup key={title} $color={color}>
                  <NavLegend>{title}</NavLegend>
                  {items.map(([label, icon]) => (
                    <SideItem key={label} label={label} icon={icon} active={label === "Phone"} />
                  ))}
                </NavGroup>
              ))}
              <SideItem label="Favorites" icon={StarIcon} />
            </SideNav>
            <FileTree />
            <TreeEdge />
            <ScrollBar>
              <Chevron />
              <ScrollTrack $top={157}>
                <ScrollThumb $size={49} />
              </ScrollTrack>
            </ScrollBar>
          </LeftContent>
        </LeftPanel>
        <Splitter>
          <CollapseTab aria-label="Collapse panel">
            <svg width="10" height="110" viewBox="0 0 10 110" fill="#d9ecff" stroke="#90caf9">
              <path d="M0 .5L8 12Q9.500 14 9.500 16V94Q9.500 96 8 98L0 109.500" />
              <path d="M6 50L3 53L6 56" fill="none" stroke="#5aaef0" />
            </svg>
          </CollapseTab>
        </Splitter>
        <Viewer>
          <ViewerHeader>
            <MemberButton>
              <HomeIcon />
              Member Center
            </MemberButton>
          </ViewerHeader>
          <TabRow>
            <Tab>iPad2 MLB Location map.pdf</Tab>
            <button aria-label="Close all tabs">
              <CloseAllIcon />
            </button>
          </TabRow>
          <ToolBar>
            <ToolGroup>
              <Tool name="book" label="Two pages" />
            </ToolGroup>
            <ToolGroup>
              <Tool name="rotateLeft" label="Rotate left" />
              <Tool name="rotateRight" label="Rotate right" />
            </ToolGroup>
            <ToolGroup>
              <label htmlFor="page">Page:</label>
              <ToolInput id="page" $width={50} value={page} onChange={(e) => setPage(e.target.value)} />
              <span>/2</span>
              <Tool name="arrowLeft" label="Previous page" />
              <Tool name="arrowRight" label="Next page" />
            </ToolGroup>
            <ToolGroup>
              <ZoomInTool />
              <Tool name="zoomOut" label="Zoom out" />
            </ToolGroup>
            <ToolGroup>
              <label htmlFor="lookup">Lookup</label>
              <ToolInput id="lookup" $width={150} />
              <Tool name="previous" label="Find previous" />
              <Tool name="next" label="Find next" />
              <ToolButton>
                <AbiLabel>Abi</AbiLabel>
              </ToolButton>
              <Tool name="find" label="Find" />
            </ToolGroup>
          </ToolBar>
          <DocumentArea>
            <PageArea>
              <Page>
                <Board />
              </Page>
            </PageArea>
            <ScrollBar>
              <Chevron />
              <ScrollTrack>
                <ScrollThumb $size={325} />
              </ScrollTrack>
              <Chevron down />
            </ScrollBar>
          </DocumentArea>
        </Viewer>
      </Body>
      <Footer>XZZ Schematics https://www.xzz.hk</Footer>
    </AppStyled>
  );
};

export default App;
